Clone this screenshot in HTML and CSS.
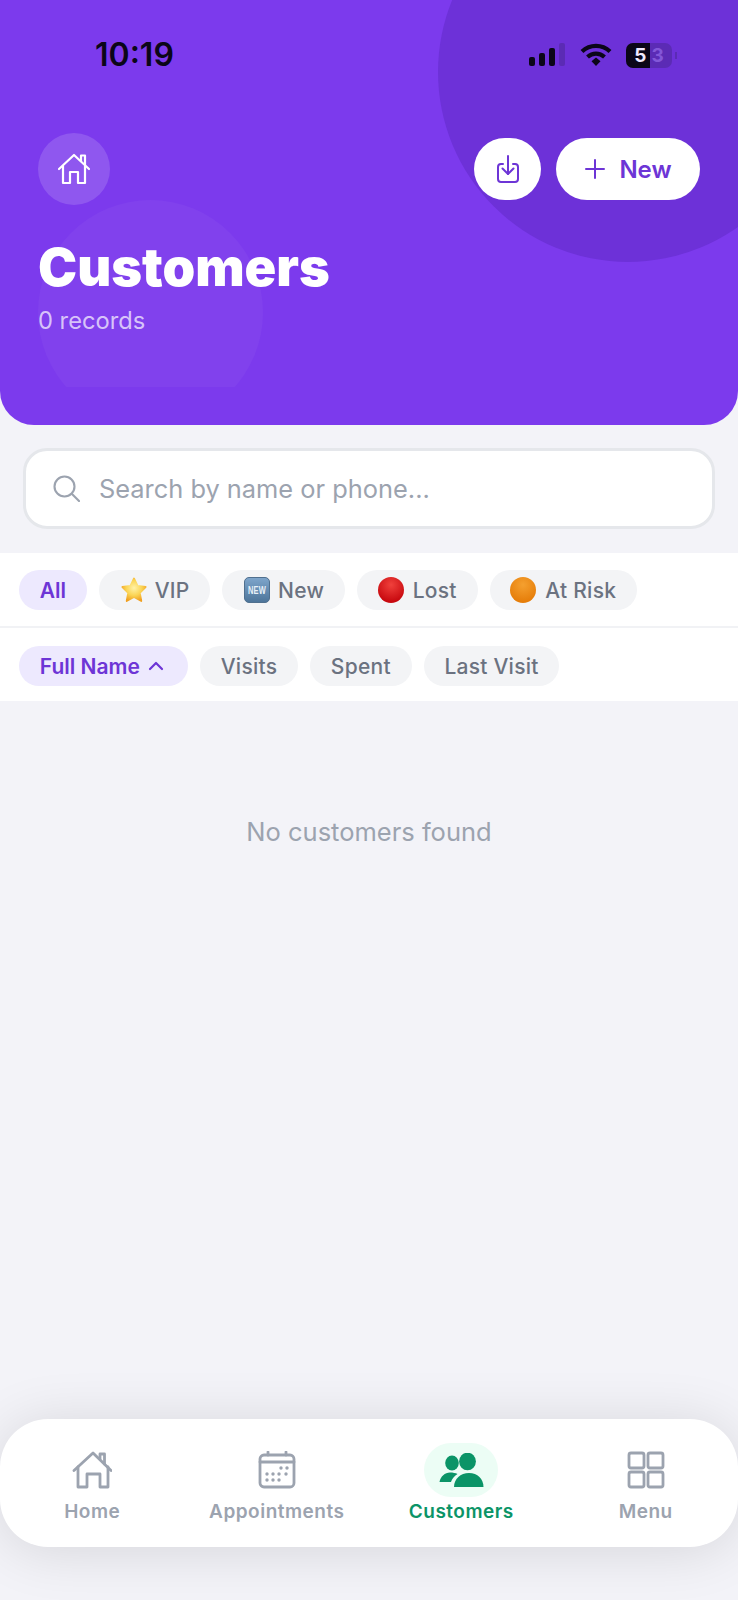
FILE: index.html
```html
<!DOCTYPE html>
<html lang="en">
<head>
  <meta charset="UTF-8" />
  <meta name="viewport" content="width=device-width, initial-scale=1.0">
  <title>Customers</title>
  <link rel="stylesheet" href="styles.css">
</head>
<body>
  <div class="page">

    <header class="hero">
      <div class="hero-bg">
        <div class="blob-dark"></div>
        <div class="blob-light"></div>
      </div>

      <div class="status-bar">
        <span class="clock">10:19</span>
        <div class="status-icons">
          <svg width="37" height="24" viewBox="0 0 37 24">
            <rect x="0" y="14" width="6" height="9" rx="2" fill="#0b0618"/>
            <rect x="10" y="10" width="6" height="13" rx="2" fill="#0b0618"/>
            <rect x="20" y="5" width="6" height="18" rx="2" fill="#0b0618"/>
            <rect x="30" y="0" width="6" height="23" rx="2" fill="#5b2bb5"/>
          </svg>
          <svg width="32" height="24" viewBox="0 0 32 24">
            <path d="M2 8.5C10 1 22 1 30 8.5" fill="none" stroke="#0b0618" stroke-width="4.2"/>
            <path d="M7.5 14C12.5 9.5 19.5 9.5 24.5 14" fill="none" stroke="#0b0618" stroke-width="4.2"/>
            <path d="M11.5 18.2L16 14.6L20.5 18.2L16 23Z" fill="#0b0618"/>
          </svg>
          <div class="battery">
            <div class="battery-fill"></div>
            <span class="battery-num">5</span><span class="battery-num dim">3</span>
          </div>
          <span class="battery-cap"></span>
        </div>
      </div>

      <div class="hero-actions">
        <button class="home-btn">
          <svg width="36" height="36" viewBox="0 0 36 36" fill="none" stroke="#fff" stroke-width="2.2" stroke-linejoin="round" stroke-linecap="round">
            <path d="M3 18L18 4L33 18"/>
            <path d="M25 10V4.5H29V14"/>
            <path d="M7 15V32H14V21H22V32H29V15"/>
          </svg>
        </button>
        <div class="action-group">
          <button class="export-btn">
            <svg width="22" height="28" viewBox="0 0 22 28" fill="none" stroke="#6d35d6" stroke-width="2" stroke-linecap="round" stroke-linejoin="round">
              <path d="M6 9H4a3 3 0 0 0-3 3v12a3 3 0 0 0 3 3h14a3 3 0 0 0 3-3V12a3 3 0 0 0-3-3h-2"/>
              <path d="M11 1V19"/>
              <path d="M5.5 13.5L11 19L16.5 13.5"/>
            </svg>
          </button>
          <button class="new-btn">
            <svg width="22" height="22" viewBox="0 0 22 22" stroke="#6d35d6" stroke-width="2" stroke-linecap="round">
              <path d="M11 2V20M2 11H20"/>
            </svg>
            New
          </button>
        </div>
      </div>

      <h1 class="title">Customers</h1>
      <p class="subtitle">0 records</p>
    </header>

    <div class="search-wrap">
      <div class="search">
        <svg width="27" height="27" viewBox="0 0 27 27" fill="none" stroke="#9ca3af" stroke-width="2.1" stroke-linecap="round">
          <circle cx="11.5" cy="11.5" r="10"/>
          <path d="M19 19L26 26"/>
        </svg>
        <span class="search-text">Search by name or phone...</span>
      </div>
    </div>

    <div class="filters">
      <div class="chip-row">
        <span class="chip active">All</span>
        <span class="chip">
          <svg width="28" height="28" viewBox="0 0 28 28">
            <defs>
              <radialGradient id="starFill" cx="50%" cy="42%" r="60%">
                <stop offset="0" stop-color="#fff2a8"/>
                <stop offset="0.55" stop-color="#fbd556"/>
                <stop offset="1" stop-color="#f0a020"/>
              </radialGradient>
            </defs>
            <path d="M14 2.5L17.6 10L25.6 11L19.8 16.8L21.3 25L14 21L6.7 25L8.2 16.8L2.4 11L10.4 10Z" fill="url(#starFill)" stroke="url(#starFill)" stroke-width="1.8" stroke-linejoin="round"/>
          </svg>
          VIP
        </span>
        <span class="chip">
          <svg width="28" height="28" viewBox="0 0 28 28">
            <defs>
              <linearGradient id="newFill" x1="0" y1="0" x2="0" y2="1">
                <stop offset="0" stop-color="#7fa6cc"/>
                <stop offset="1" stop-color="#4c7499"/>
              </linearGradient>
            </defs>
            <rect x="1.5" y="1.5" width="25" height="25" rx="4.5" fill="url(#newFill)" stroke="#50708f"/>
            <text x="14" y="18" text-anchor="middle" textLength="18" lengthAdjust="spacingAndGlyphs" class="emoji-new">NEW</text>
          </svg>
          New
        </span>
        <span class="chip wide-gap">
          <span class="dot red"></span>
          Lost
        </span>
        <span class="chip wide-gap">
          <span class="dot orange"></span>
          At Risk
        </span>
      </div>
      <div class="chip-row second">
        <span class="chip active sort">
          Full Name
          <svg width="16" height="10" viewBox="0 0 16 10" fill="none" stroke="#6d35d6" stroke-width="2.2" stroke-linecap="round" stroke-linejoin="round">
            <path d="M2 8L8 2L14 8"/>
          </svg>
        </span>
        <span class="chip">Visits</span>
        <span class="chip">Spent</span>
        <span class="chip">Last Visit</span>
      </div>
    </div>

    <main class="content">
      <p class="empty">No customers found</p>
    </main>

    <nav class="tabbar">
      <a class="tab">
        <span class="tab-icon">
          <svg width="40" height="38" viewBox="0 0 40 38" fill="none" stroke="#9ca3af" stroke-width="2.8" stroke-linejoin="round" stroke-linecap="round">
            <path d="M2 19.5L21 2L39 19.5"/>
            <path d="M28 8V3H32.5V13"/>
            <path d="M6 16V36H15V23H28V36H36V16"/>
          </svg>
        </span>
        Home
      </a>
      <a class="tab">
        <span class="tab-icon">
          <svg width="38" height="38" viewBox="0 0 38 38" fill="none" stroke="#9ca3af" stroke-width="2.8" stroke-linecap="round">
            <rect x="2" y="4" width="34" height="32" rx="4"/>
            <path d="M2 11H36M10 1V4M28 1V4"/>
            <g fill="#9ca3af" stroke="none">
              <circle cx="23" cy="17" r="1.7"/><circle cx="29" cy="17" r="1.7"/>
              <circle cx="9" cy="23" r="1.7"/><circle cx="15" cy="23" r="1.7"/><circle cx="21" cy="23" r="1.7"/><circle cx="28" cy="23" r="1.7"/>
              <circle cx="9" cy="29" r="1.7"/><circle cx="15" cy="29" r="1.7"/><circle cx="21" cy="29" r="1.7"/>
            </g>
          </svg>
        </span>
        Appointments
      </a>
      <a class="tab current">
        <span class="tab-icon">
          <svg width="46" height="34" viewBox="0 0 46 34" fill="#0b9467">
            <ellipse cx="14" cy="10" rx="6.8" ry="7.4"/>
            <ellipse cx="29.5" cy="8.5" rx="8.4" ry="8.8"/>
            <path d="M1.5 29C2.5 23.5 7 19.5 12 19.5C15 19.5 17.5 20 19.5 21C16 23 14 26 13 29Z"/>
            <path d="M16 34C16 26 22.5 20 31 20C39.5 20 45.5 26 45.5 34Z"/>
          </svg>
        </span>
        Customers
      </a>
      <a class="tab">
        <span class="tab-icon">
          <svg width="38" height="38" viewBox="0 0 38 38" fill="none" stroke="#9ca3af" stroke-width="2.8">
            <rect x="2" y="2" width="15" height="15" rx="2"/>
            <rect x="21" y="2" width="15" height="15" rx="2"/>
            <rect x="2" y="21" width="15" height="15" rx="2"/>
            <rect x="21" y="21" width="15" height="15" rx="2"/>
          </svg>
        </span>
        Menu
      </a>
    </nav>

  </div>
</body>
</html>
```

FILE: styles.css
```css
* {
  margin: 0;
  padding: 0;
  box-sizing: border-box;
}

html, body {
  height: 100%;
  font-family: Inter, "Noto Sans", sans-serif;
  background: #f3f3f8;
}

.page {
  min-height: 1600px;
  display: flex;
  flex-direction: column;
}

/* header */
.hero {
  position: relative;
  height: 425px;
  padding: 0 38px;
  background: #7c3aed;
  border-radius: 0 0 34px 34px;
  overflow: hidden;
  color: #fff;
}

.hero-bg {
  position: absolute;
  top: 0;
  left: 0;
  width: 100%;
  height: 387px;
  overflow: hidden;
}

.blob-dark {
  position: absolute;
  top: -118px;
  right: -80px;
  width: 380px;
  height: 380px;
  border-radius: 50%;
  background: #6d31d8;
}

.blob-light {
  position: absolute;
  top: 200px;
  left: 38px;
  width: 225px;
  height: 225px;
  border-radius: 50%;
  background: rgba(255, 255, 255, 0.04);
}

.status-bar {
  position: relative;
  height: 133px;
  display: flex;
  justify-content: space-between;
  align-items: flex-start;
  padding: 36px 0 0 57px;
}

.clock {
  font-size: 32px;
  font-weight: 600;
  line-height: 38px;
  color: #0b0618;
}

.status-icons {
  display: flex;
  align-items: center;
  gap: 14px;
  height: 38px;
  margin-right: 23px;
}

.battery {
  position: relative;
  width: 46px;
  height: 25px;
  border-radius: 7px;
  background: #5b2bb5;
  overflow: hidden;
  display: flex;
  justify-content: center;
  align-items: center;
  gap: 5px;
}

.battery-fill {
  position: absolute;
  top: 0;
  left: 0;
  width: 24px;
  height: 100%;
  background: #0b0618;
}

.battery-num {
  position: relative;
  font-size: 19px;
  font-weight: 700;
  color: #efe8ff;
}

.battery-num.dim {
  color: #8357d8;
}

.battery-cap {
  width: 2px;
  height: 7px;
  margin-left: -11px;
  background: #5b2bb5;
}

.hero-actions {
  position: relative;
  display: flex;
  justify-content: space-between;
  align-items: flex-start;
}

.home-btn {
  width: 72px;
  height: 72px;
  border: none;
  border-radius: 50%;
  background: rgba(255, 255, 255, 0.15);
  display: flex;
  justify-content: center;
  align-items: center;
}

.action-group {
  display: flex;
  gap: 15px;
  margin-top: 5px;
}

.export-btn,
.new-btn {
  height: 62px;
  border: none;
  border-radius: 31px;
  background: #fff;
  display: flex;
  justify-content: center;
  align-items: center;
}

.export-btn {
  width: 67px;
}

.new-btn {
  width: 144px;
  gap: 13px;
  font-family: inherit;
  font-size: 24px;
  font-weight: 600;
  color: #6d35d6;
}

.title {
  position: relative;
  margin-top: 32px;
  font-size: 52.4px;
  font-weight: 900;
  line-height: 60px;
}

.subtitle {
  position: relative;
  margin-top: 8px;
  font-size: 23.7px;
  line-height: 32px;
  color: rgba(255, 255, 255, 0.7);
}

/* search */
.search-wrap {
  padding: 23px 23px 24px;
}

.search {
  height: 81px;
  padding: 0 27px;
  display: flex;
  align-items: center;
  gap: 19px;
  background: #fff;
  border: 3px solid #e5e7eb;
  border-radius: 24px;
}

.search-text {
  font-size: 25.4px;
  color: #9ca3af;
}

/* chips */
.filters {
  background: #fff;
}

.chip-row {
  height: 75px;
  padding: 17px 19px 0;
  display: flex;
  gap: 12px;
  border-bottom: 2px solid #f1f2f5;
}

.chip-row.second {
  height: 73px;
  padding-top: 18px;
  border-bottom: none;
}

.chip {
  height: 40px;
  padding: 0 20.8px;
  display: flex;
  align-items: center;
  gap: 7px;
  border-radius: 20px;
  background: #f3f4f6;
  font-size: 21px;
  font-weight: 500;
  letter-spacing: 0.25px;
  color: #6b7280;
  white-space: nowrap;
}

.chip.wide-gap {
  gap: 9px;
}

.chip.sort {
  gap: 8px;
  padding-right: 24px;
}

.chip.active {
  background: #ede9fe;
  font-weight: 600;
  letter-spacing: 0;
  color: #6d35d6;
}

.emoji-new {
  font-family: "Liberation Sans", sans-serif;
  font-size: 10px;
  font-weight: 700;
  fill: #e8f0f8;
}

.dot {
  width: 26px;
  height: 26px;
  border-radius: 50%;
}

.dot.red {
  background: radial-gradient(circle at 50% 30%, #f0413c, #c8090f 75%);
}

.dot.orange {
  background: radial-gradient(circle at 50% 30%, #f5a02f, #e67e0a 75%);
}

/* empty */
.content {
  flex: 1;
  padding-top: 112px;
}

.empty {
  font-size: 25.5px;
  line-height: 38px;
  text-align: center;
  color: #9ca3af;
}

/* bottom nav */
.tabbar {
  height: 128px;
  margin-bottom: 53px;
  display: grid;
  grid-template-columns: repeat(4, 1fr);
  background: #fff;
  border-radius: 48px;
  box-shadow: 0 4px 56px rgba(0, 0, 0, 0.12);
}

.tab {
  padding-top: 24px;
  display: flex;
  flex-direction: column;
  align-items: center;
  font-size: 19px;
  font-weight: 600;
  letter-spacing: 0.5px;
  color: #9ca3af;
}

.tab-icon {
  width: 74px;
  height: 54px;
  margin-bottom: 3px;
  border-radius: 27px;
  display: flex;
  justify-content: center;
  align-items: center;
}

.tab.current {
  color: #0b9467;
}

.tab.current .tab-icon {
  background: #ecfdf5;
}
```
